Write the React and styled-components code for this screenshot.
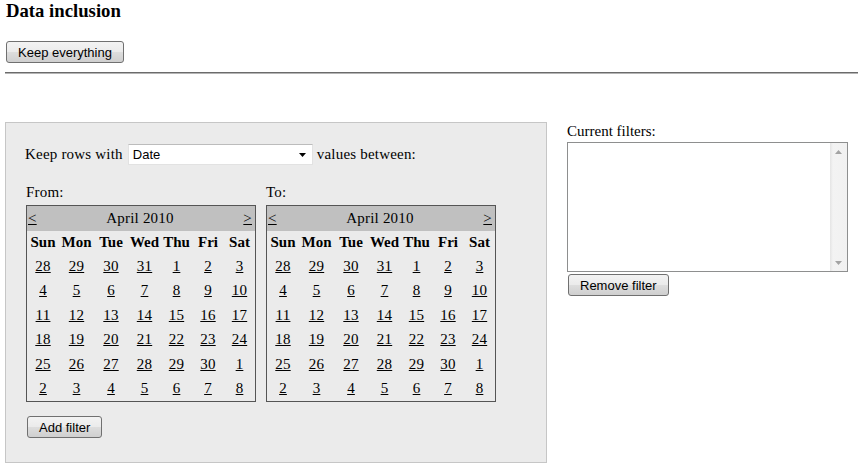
import React from "react";
import styled, { createGlobalStyle } from "styled-components";

const Global = createGlobalStyle`
  html, body { margin: 0; padding: 0; background: #fff; }
  body {
    font-family: "Liberation Serif", "Times New Roman", serif;
    font-size: 15px;
    letter-spacing: 0.2px;
    color: #000;
  }
`;

const Page = styled.div`
  padding-left: 5px;
  overflow: hidden;
`;

const Title = styled.h3`
  margin: 0;
  padding-left: 1px;
  font-size: 18.72px;
  font-weight: bold;
  letter-spacing: 0;
  line-height: 22px;
`;

const TopBar = styled.div`
  margin-top: 19px;
  padding-left: 1px;
  display: flex;
`;

const Button = styled.button`
  font-family: "Liberation Sans", Arial, sans-serif;
  font-size: 13px;
  letter-spacing: 0;
  height: 22px;
  padding: 0 11px;
  border: 1px solid #707070;
  border-radius: 3px;
  background: linear-gradient(#f3f3f3 0%, #ebebeb 48%, #dddddd 52%, #cfcfcf 100%);
  color: #000;
  cursor: pointer;
`;

const Rule = styled.hr`
  margin: 9px 0 0;
  height: 0;
  border: 0;
  border-top: 1px solid #6b6b6b;
  border-bottom: 1px solid #b4b4b4;
`;

const Main = styled.div`
  margin-top: 48px;
  display: flex;
  align-items: flex-start;
  gap: 20px;
`;

const Panel = styled.div`
  width: 500px;
  border: 1px solid #c6c6c6;
  background: #ebebeb;
  padding: 21px 20px 24px 20px;
`;

const FieldRow = styled.div`
  display: flex;
  align-items: center;
  height: 21px;
  margin-left: -1px;
  gap: 4px;
`;

const SelectBox = styled.div`
  width: 183px;
  height: 19px;
  display: flex;
  align-items: center;
  background: #fff;
  border: 1px solid #e2e2e2;
  border-top-color: #bcbcbc;
  margin-left: 1px;
`;

const NativeSelect = styled.select`
  flex: 1;
  min-width: 0;
  appearance: none;
  -webkit-appearance: none;
  border: 0;
  outline: none;
  background: transparent;
  font-family: "Liberation Sans", Arial, sans-serif;
  font-size: 13px;
  letter-spacing: 0;
  color: #000;
  padding: 0 0 0 4px;
  height: 19px;
`;

const Arrow = styled.svg`
  flex: none;
  margin-right: 6px;
`;

const Calendars = styled.div`
  display: flex;
  gap: 10px;
  margin-top: 19px;
`;

const CalColumn = styled.div`
  display: flex;
  flex-direction: column;
`;

const CalLabel = styled.div`
  height: 18px;
  margin-bottom: 3px;
`;

const Calendar = styled.div`
  width: 228px;
  height: 195px;
  border: 1px solid #555;
  background: #ebebeb;
  display: flex;
  flex-direction: column;
`;

const CalHeader = styled.div`
  height: 25px;
  flex: none;
  background: #c0c0c0;
  display: grid;
  grid-template-columns: auto 1fr auto;
  align-items: center;
  padding: 0 3px 0 1px;
`;

const NavLink = styled.a`
  color: #000;
  text-decoration: underline;
  cursor: pointer;
`;

const MonthName = styled.span`
  text-align: center;
`;

const DayTable = styled.table`
  width: 228px;
  table-layout: fixed;
  border-collapse: collapse;
  border-spacing: 0;
`;

const Col = styled.col`
  width: ${(p) => p.$w}px;
`;

const Row = styled.tr`
  height: ${(p) => p.$h}px;
`;

const DayHead = styled.th`
  padding: 0;
  font-weight: bold;
  letter-spacing: 0;
  text-align: center;
  vertical-align: middle;
`;

const DayCell = styled.td`
  padding: 0;
  text-align: center;
  vertical-align: middle;
`;

const DayLink = styled.a`
  color: #000;
  text-decoration: underline;
  cursor: pointer;
`;

const ActionRow = styled.div`
  margin-top: 14px;
  padding-left: 1px;
  display: flex;
`;

const Side = styled.div`
  display: flex;
  flex-direction: column;
  align-items: flex-start;
`;

const SideLabel = styled.div`
  height: 19px;
  padding-top: 1px;
  letter-spacing: 0;
`;

const ListBox = styled.div`
  width: 279px;
  height: 128px;
  border: 1px solid #8e8f8f;
  background: #fff;
  display: flex;
`;

const ListArea = styled.textarea`
  flex: 1;
  border: 0;
  outline: none;
  resize: none;
  overflow: hidden;
  background: transparent;
  font-family: "Liberation Sans", Arial, sans-serif;
  font-size: 13px;
`;

const ScrollTrack = styled.div`
  width: 17px;
  background: linear-gradient(to right, #e4e4e4 0, #f3f3f3 3px, #f1f1f1 100%);
  display: flex;
  flex-direction: column;
  justify-content: space-between;
  align-items: center;
`;

const ScrollBtn = styled.div`
  height: 17px;
  display: flex;
  align-items: center;
  justify-content: center;
`;

const SideAction = styled.div`
  margin-top: 2px;
  padding-left: 1px;
  display: flex;
`;

const weeks = [
  [28, 29, 30, 31, 1, 2, 3],
  [4, 5, 6, 7, 8, 9, 10],
  [11, 12, 13, 14, 15, 16, 17],
  [18, 19, 20, 21, 22, 23, 24],
  [25, 26, 27, 28, 29, 30, 1],
  [2, 3, 4, 5, 6, 7, 8],
];
const rowHeights = [24, 25, 24, 25, 24, 25];
const colWidths = [32, 35, 34, 33, 31, 32, 31];
const dayNames = ["Sun", "Mon", "Tue", "Wed", "Thu", "Fri", "Sat"];

function MonthCalendar() {
  return (
    <Calendar>
      <CalHeader>
        <NavLink>&lt;</NavLink>
        <MonthName>April 2010</MonthName>
        <NavLink>&gt;</NavLink>
      </CalHeader>
      <DayTable>
        <colgroup>
          {colWidths.map((w, i) => (
            <Col key={i} $w={w} />
          ))}
        </colgroup>
        <thead>
          <Row $h={23}>
            {dayNames.map((d) => (
              <DayHead key={d}>{d}</DayHead>
            ))}
          </Row>
        </thead>
        <tbody>
          {weeks.map((w, i) => (
            <Row key={i} $h={rowHeights[i]}>
              {w.map((d, j) => (
                <DayCell key={j}>
                  <DayLink>{d}</DayLink>
                </DayCell>
              ))}
            </Row>
          ))}
        </tbody>
      </DayTable>
    </Calendar>
  );
}

export default function App() {
  return (
    <Page>
      <Global />
      <Title>Data inclusion</Title>
      <TopBar>
        <Button>Keep everything</Button>
      </TopBar>
      <Rule />
      <Main>
        <Panel>
          <FieldRow>
            <span>Keep rows with</span>
            <SelectBox>
              <NativeSelect defaultValue="Date">
                <option>Date</option>
              </NativeSelect>
              <Arrow width="7" height="4" viewBox="0 0 7 4">
                <path d="M0 0H7L3.5 4Z" fill="#000" />
              </Arrow>
            </SelectBox>
            <span>values between:</span>
          </FieldRow>
          <Calendars>
            <CalColumn>
              <CalLabel>From:</CalLabel>
              <MonthCalendar />
            </CalColumn>
            <CalColumn>
              <CalLabel>To:</CalLabel>
              <MonthCalendar />
            </CalColumn>
          </Calendars>
          <ActionRow>
            <Button>Add filter</Button>
          </ActionRow>
        </Panel>
        <Side>
          <SideLabel>Current filters:</SideLabel>
          <ListBox>
            <ListArea />
            <ScrollTrack>
              <ScrollBtn>
                <svg width="7" height="4" viewBox="0 0 7 4">
                  <path d="M0 4H7L3.5 0Z" fill="#a3a3a3" />
                </svg>
              </ScrollBtn>
              <ScrollBtn>
                <svg width="7" height="4" viewBox="0 0 7 4">
                  <path d="M0 0H7L3.5 4Z" fill="#a3a3a3" />
                </svg>
              </ScrollBtn>
            </ScrollTrack>
          </ListBox>
          <SideAction>
            <Button>Remove filter</Button>
          </SideAction>
        </Side>
      </Main>
    </Page>
  );
}
